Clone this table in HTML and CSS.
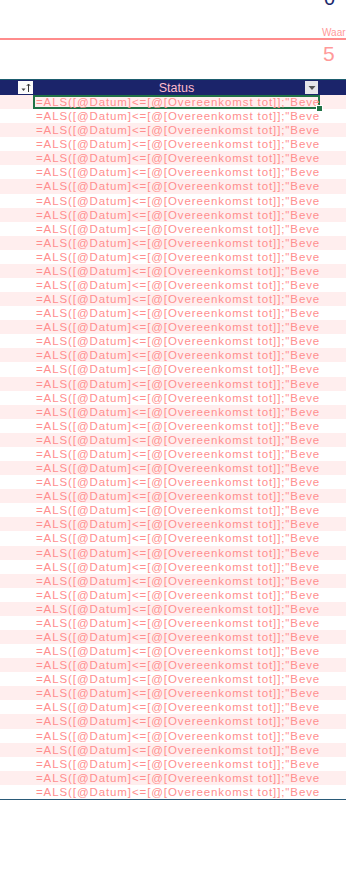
FILE: index.html
```html
<!DOCTYPE html>
<html lang="nl">
<head>
<meta charset="utf-8">
<title>Status</title>
<link rel="stylesheet" href="styles.css">
</head>
<body>
<div class="kpi">
  <div class="kpi-prev"><span>0</span></div>
  <div class="kpi-label">Waar</div>
  <div class="kpi-rule"></div>
  <div class="kpi-value">5</div>
</div>
<div class="table">
  <div class="thead">
    <div class="th th-first">
      <span class="fbtn fbtn-sort">
        <svg width="12" height="11" viewBox="0 0 12 11"><path d="M1.5 6.5h4l-2 2.5z" fill="#444"/><path d="M8.5 10V2.2M6.8 3.9L8.5 2l1.7 1.9" stroke="#333" stroke-width="1" fill="none"/></svg>
      </span>
    </div>
    <div class="th th-status"><span class="th-text">Status</span>
      <span class="fbtn fbtn-drop"><svg width="12" height="11" viewBox="0 0 12 11"><path d="M2.5 4h7l-3.5 4z" fill="#555"/></svg></span>
    </div>
    <div class="th th-rest"></div>
  </div>
  <div class="tbody" id="tbody"></div>
</div>
<script src="app.js"></script>
</body>
</html>
```
FILE: styles.css
```css
html, body { margin: 0; padding: 0; background: #fff; }
body { font-family: "Liberation Sans", Arial, sans-serif; width: 346px; overflow: hidden; }

.kpi { height: 79px; overflow: hidden; }
.kpi-prev { height: 5px; overflow: hidden; padding-left: 324px; color: #1d2a6e; }
.kpi-prev span { display: block; margin-top: -12px; font-size: 20px; line-height: 20px; }
.kpi-label { margin-top: 22px; padding-left: 322px; font-size: 10px; line-height: 11px; color: #ff9a9a; white-space: nowrap; }
.kpi-rule { height: 2px; background: #ff8c8c; }
.kpi-value { margin-top: 3px; padding-left: 323px; font-size: 21px; line-height: 22px; color: #ff9a9a; }

.table { border-bottom: 1px solid #2a5a78; }
.thead { display: grid; grid-template-columns: 33px 287px 1fr; height: 16px; border-top: 1px solid #1d5d6e; background: #1b246a; box-sizing: border-box; }
.th { display: flex; align-items: center; position: relative; }
.th-first { justify-content: flex-end; }
.th-status { justify-content: center; }
.th-text { font-size: 12.5px; color: #ffbccb; line-height: 14px; }
.fbtn { display: flex; align-items: center; justify-content: center; height: 13px; box-sizing: border-box; }
.fbtn-sort { width: 15px; background: #fbfbfb; }
.fbtn-drop { position: absolute; right: 2px; top: 1px; width: 13px; background: #e6e6ea; }

.tbody { display: grid; grid-auto-rows: 14.08px; }
.row { display: grid; grid-template-columns: 33px 287px 1fr; }
.row:nth-child(odd) { background: #ffeeee; }
.cell { overflow: hidden; white-space: nowrap; font-size: 11.5px; line-height: 14px; color: #ff8e8e; letter-spacing: 0.9px; padding-left: 3px; }
.cell-sel { position: relative; box-shadow: inset 0 0 0 2px #217346; overflow: visible; }
.cell-sel .clip { display: block; overflow: hidden; }
.handle { position: absolute; right: -3px; bottom: -3px; width: 5px; height: 5px; background: #217346; border: 1px solid #fff; }
```
FILE: app.js
```js
(function () {
  var tb = document.getElementById('tbody');
  var f = '=ALS([@Datum]&lt;=[@[Overeenkomst tot]];"Bevestigd";"Verlopen")';
  var html = '';
  for (var i = 0; i < 50; i++) {
    if (i === 0) {
      html += '<div class="row"><div></div><div class="cell cell-sel"><span class="clip">' + f + '</span><span class="handle"></span></div><div></div></div>';
    } else {
      html += '<div class="row"><div></div><div class="cell">' + f + '</div><div></div></div>';
    }
  }
  tb.innerHTML = html;
})();
```
